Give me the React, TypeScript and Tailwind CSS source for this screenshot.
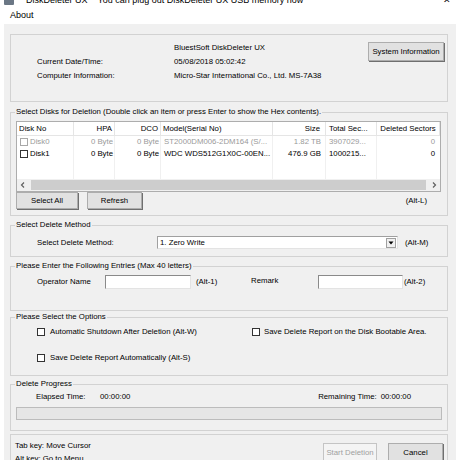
import React from 'react'

const disks = [
  { no: 'Disk0', hpa: '0 Byte', dco: '0 Byte', model: 'ST2000DM006-2DM164 (S/...', size: '1.82 TB', total: '3907029...', del: '0', dim: true },
  { no: 'Disk1', hpa: '0 Byte', dco: '0 Byte', model: 'WDC WDS512G1X0C-00EN...', size: '476.9 GB', total: '1000215...', del: '0', dim: false },
]

function Box({ dim }: { dim?: boolean }) {
  return (
    <span
      className={
        'inline-block w-[8px] h-[8px] bg-white border shrink-0 ' +
        (dim ? 'border-[#a8a8a8]' : 'border-[#333333]')
      }
    />
  )
}

function Btn({ children, className = '', disabled }: { children: React.ReactNode; className?: string; disabled?: boolean }) {
  return (
    <div
      className={
        'flex items-center justify-center border ' +
        (disabled
          ? 'bg-[#f4f4f4] border-[#c4c4c4] text-[#a0a0a0] '
          : 'bg-[#e1e1e1] border-[#adadad] shadow-[1px_1px_0_#6f6f6f] ') +
        className
      }
    >
      {children}
    </div>
  )
}

function Group({ title, className = '', children }: { title: string; className?: string; children: React.ReactNode }) {
  return (
    <fieldset className={'mx-[6px] w-[438px] border border-[#d2d2d2] ' + className}>
      <legend className="ml-[4px] px-[1px] leading-[10px]">{title}</legend>
      {children}
    </fieldset>
  )
}

export default function App() {
  return (
    <div className="w-[460px] h-[460px] overflow-hidden bg-white text-[7.8px] text-black font-['Liberation_Sans',Arial,sans-serif]">
      {/* title bar, mostly scrolled off */}
      <div className="h-[7px] overflow-hidden">
        <div className="-mt-[4px] h-[9px] flex items-center leading-[9px] text-[9px]">
          <span className="ml-[4px] w-[10px] h-[8px] rounded-[1px] bg-[#6b7785]" />
          <span className="ml-[12px]">DiskDeleter UX</span>
          <span className="ml-[10px]">You can plug out DiskDeleter UX USB memory now</span>
          <span className="ml-auto mr-[9px]">✕</span>
        </div>
      </div>

      {/* menu */}
      <div className="h-[17px] flex items-center text-[9px] pl-[10px]">About</div>

      {/* dialog body */}
      <div className="ml-[4px] w-[452px] h-[436px] bg-[#f0f0f0] pt-[10px]">
        {/* info */}
        <div className="mx-[6px] w-[438px] h-[68px] border border-[#d2d2d2] flex">
          <div className="pt-[6px] pl-[26px] grid grid-cols-[137px_auto] auto-rows-[14px] items-center">
            <span />
            <span>BluestSoft DiskDeleter UX</span>
            <span>Current Date/Time:</span>
            <span>05/08/2018 05:02:42</span>
            <span>Computer Information:</span>
            <span>Micro-Star International Co., Ltd. MS-7A38</span>
          </div>
          <Btn className="ml-auto mr-[3px] mt-[7px] w-[76px] h-[19px]">System Information</Btn>
        </div>

        {/* disks */}
        <Group title="Select Disks for Deletion (Double click an item or press Enter to show the Hex contents)." className="mt-[5px] h-[109px]">
          <div className="ml-[5px] mt-[4px] w-[425px] h-[71px] border border-[#adadad] bg-white flex flex-col">
            <div className="flex h-[14px] border-b border-[#e5e5e5]">
              <div className="w-[57px] pl-[2px] border-r border-[#e5e5e5] flex items-center">Disk No</div>
              <div className="w-[41px] pr-[2px] border-r border-[#e5e5e5] flex items-center justify-end">HPA</div>
              <div className="w-[46px] pr-[2px] border-r border-[#e5e5e5] flex items-center justify-end">DCO</div>
              <div className="w-[112px] pl-[2px] border-r border-[#e5e5e5] flex items-center">Model(Serial No)</div>
              <div className="w-[53px] pr-[5px] border-r border-[#e5e5e5] flex items-center justify-end">Size</div>
              <div className="w-[51px] pl-[3px] border-r border-[#e5e5e5] flex items-center">Total Sec...</div>
              <div className="w-[63px] border-r border-[#e5e5e5] flex items-center justify-center">Deleted Sectors</div>
            </div>
            <div className="relative flex-1">
              <div className="absolute inset-0 flex pointer-events-none">
                <div className="w-[57px] border-r border-[#f0f0f0]" />
                <div className="w-[41px] border-r border-[#f0f0f0]" />
                <div className="w-[46px] border-r border-[#f0f0f0]" />
                <div className="w-[112px] border-r border-[#f0f0f0]" />
                <div className="w-[53px] border-r border-[#f0f0f0]" />
                <div className="w-[51px] border-r border-[#f0f0f0]" />
              </div>
              {disks.map((d) => (
                <div key={d.no} className={'relative flex h-[12px] items-center ' + (d.dim ? 'text-[#9a9a9a]' : 'text-black')}>
                  <div className="w-[57px] pl-[3px] flex items-center gap-[2px]">
                    <Box dim={d.dim} />
                    <span>{d.no}</span>
                  </div>
                  <div className="w-[41px] pr-[2px] text-right">{d.hpa}</div>
                  <div className="w-[46px] pr-[2px] text-right">{d.dco}</div>
                  <div className="w-[112px] pl-[3px] whitespace-nowrap overflow-hidden">{d.model}</div>
                  <div className="w-[53px] pr-[5px] text-right">{d.size}</div>
                  <div className="w-[51px] pl-[3px]">{d.total}</div>
                  <div className="w-[63px] pr-[5px] text-right">{d.del}</div>
                </div>
              ))}
            </div>
            <div className="h-[12px] bg-[#f0f0f0] flex items-center">
              <svg width="12" height="12" viewBox="0 0 12 12" className="shrink-0">
                <path d="M7 3.5 L4.5 6 L7 8.5" fill="none" stroke="#606060" strokeWidth="1.2" />
              </svg>
              <div className="flex-1 h-[10px] mx-[2px] bg-[#cdcdcd]" />
              <svg width="12" height="12" viewBox="0 0 12 12" className="shrink-0">
                <path d="M5 3.5 L7.5 6 L5 8.5" fill="none" stroke="#606060" strokeWidth="1.2" />
              </svg>
            </div>
          </div>
          <div className="ml-[5px] flex items-center">
            <Btn className="w-[62px] h-[17px]">Select All</Btn>
            <Btn className="ml-[9px] w-[55px] h-[17px]">Refresh</Btn>
            <span className="ml-auto mr-[20px] mt-[1px]">(Alt-L)</span>
          </div>
        </Group>

        {/* method */}
        <Group title="Select Delete Method" className="mt-[4px] h-[37px]">
          <div className="mt-[6px] h-[13px] flex items-center pl-[26px]">
            <span className="w-[120px]">Select Delete Method:</span>
            <div className="w-[241px] h-[13px] bg-white border border-t-[#a0a0a0] border-l-[#a0a0a0] border-r-[#e3e3e3] border-b-[#e3e3e3] flex items-center pl-[2px]">
              <span>1. Zero Write</span>
              <div className="ml-auto mr-[1px] w-[10px] h-[10px] bg-[#f0f0f0] border border-[#a0a0a0] flex items-center justify-center">
                <svg width="6" height="4" viewBox="0 0 6 4">
                  <path d="M0.5 0.5 H5.5 L3 3.5 Z" fill="#000" />
                </svg>
              </div>
            </div>
            <span className="ml-[7px]">(Alt-M)</span>
          </div>
        </Group>

        {/* entries */}
        <Group title="Please Enter the Following Entries (Max 40 letters)" className="mt-[4px] h-[50px]">
          <div className="mt-[4px] h-[14px] flex items-center pl-[26px]">
            <span className="w-[68px]">Operator Name</span>
            <div className="w-[86px] h-[14px] bg-white border border-t-[#8a8a8a] border-l-[#8a8a8a] border-r-[#e3e3e3] border-b-[#e3e3e3]" />
            <span className="ml-[5px] w-[55px]">(Alt-1)</span>
            <span className="w-[67px] -mt-[2px]">Remark</span>
            <div className="w-[85px] h-[14px] bg-white border border-t-[#8a8a8a] border-l-[#8a8a8a] border-r-[#e3e3e3] border-b-[#e3e3e3]" />
            <span className="ml-[1px]">(Alt-2)</span>
          </div>
        </Group>

        {/* options */}
        <Group title="Please Select the Options" className="mt-[1px] h-[64px]">
          <div className="mt-[4px] h-[12px] flex items-center">
            <div className="pl-[26px] w-[241px] flex items-center gap-[5px]">
              <Box />
              <span>Automatic Shutdown After Deletion (Alt-W)</span>
            </div>
            <div className="flex items-center gap-[4px]">
              <Box />
              <span>Save Delete Report on the Disk Bootable Area.</span>
            </div>
          </div>
          <div className="mt-[14px] h-[12px] pl-[26px] flex items-center gap-[5px]">
            <Box />
            <span>Save Delete Report Automatically (Alt-S)</span>
          </div>
        </Group>

        {/* progress */}
        <Group title="Delete Progress" className="mt-[3px] h-[52px]">
          <div className="mt-[2px] h-[12px] flex items-center pl-[25px]">
            <span className="w-[64px]">Elapsed Time:</span>
            <span>00:00:00</span>
            <span className="ml-auto">Remaining Time:</span>
            <span className="ml-[4px] mr-[36px]">00:00:00</span>
          </div>
          <div className="ml-[5px] mt-[4px] w-[426px] h-[13px] bg-[#e6e6e6] border border-[#bcbcbc]" />
        </Group>

        {/* footer */}
        <div className="mx-[6px] mt-[3px] w-[438px] h-[40px] border border-[#d2d2d2] flex">
          <div className="pl-[4px] pt-[4px] leading-[13px]">
            <div>Tab key: Move Cursor</div>
            <div>Alt key: Go to Menu</div>
          </div>
          <Btn disabled className="ml-auto mt-[8px] w-[54px] h-[19px]">Start Deletion</Btn>
          <Btn className="ml-[11px] mr-[4px] mt-[8px] w-[55px] h-[19px]">Cancel</Btn>
        </div>
      </div>
    </div>
  )
}
